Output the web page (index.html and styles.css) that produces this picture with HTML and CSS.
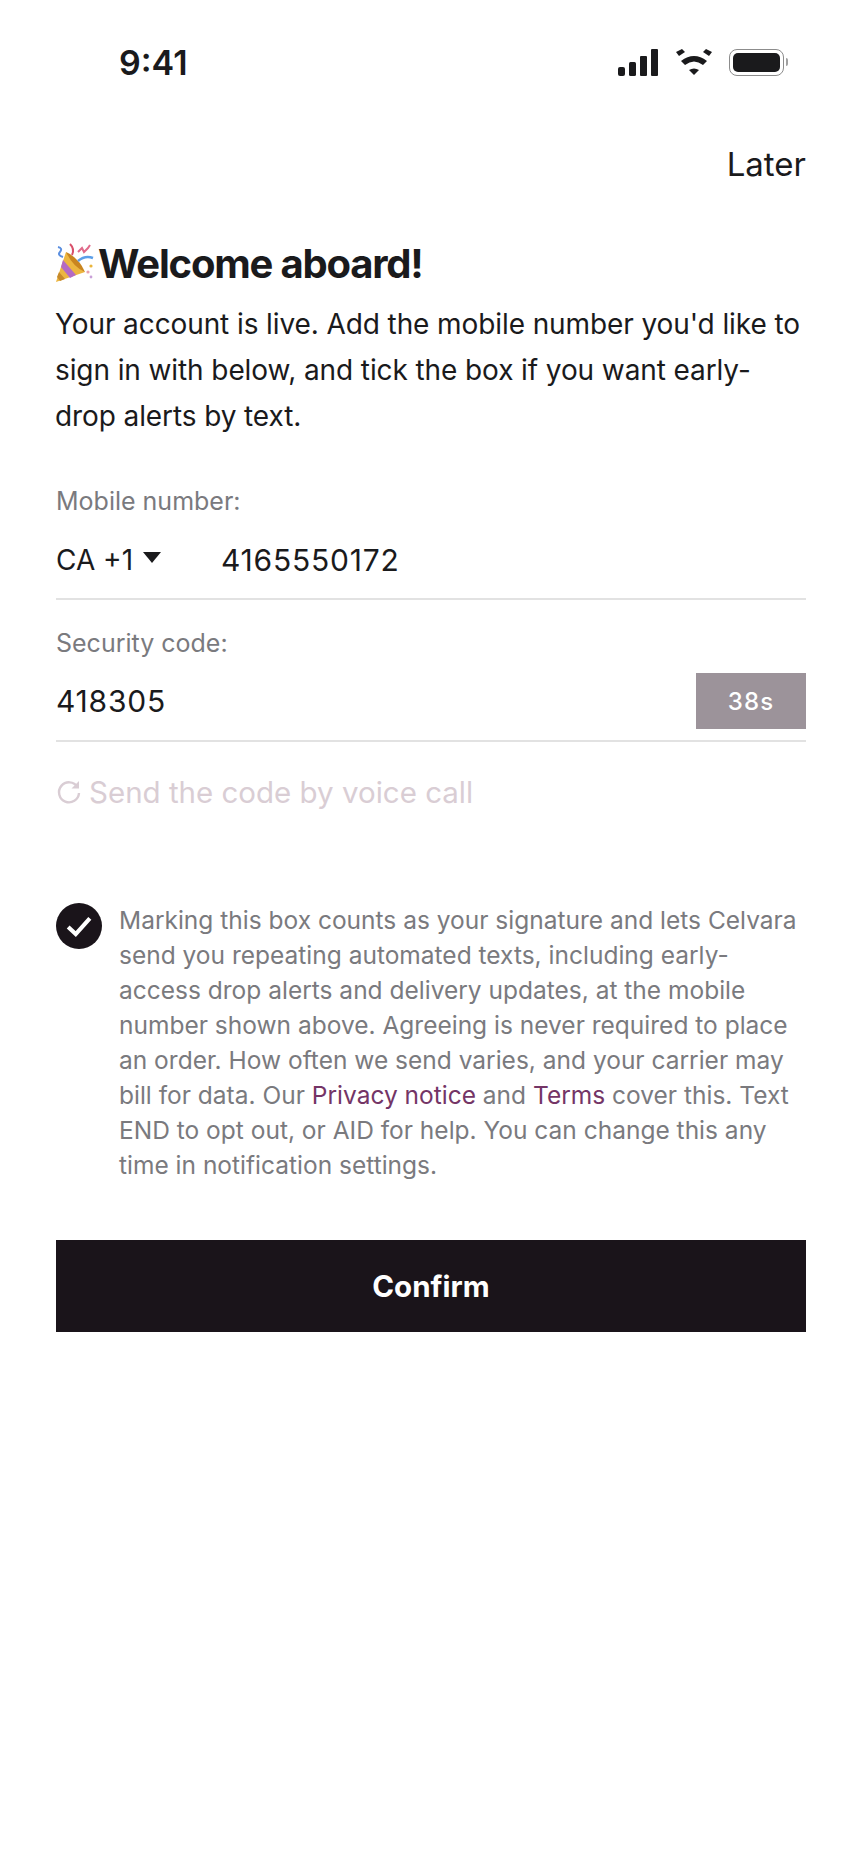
FILE: index.html
```html
<!DOCTYPE html>
<html lang="en">
  <head>
    <meta charset="UTF-8" />
    <meta name="viewport" content="width=device-width, initial-scale=1.0" />
    <title>Welcome aboard</title>
    <link rel="stylesheet" href="styles.css">
  </head>
  <body>
    <div class="status-bar">
      <span class="time">9:41</span>
      <div class="status-icons">
        <svg class="signal" width="40" height="27" viewBox="0 0 40 27">
          <rect x="0" y="18" width="7" height="9" rx="2" />
          <rect x="11" y="13" width="7" height="14" rx="1.5" />
          <rect x="22" y="7" width="7" height="20" rx="1" />
          <rect x="33" y="0" width="7" height="27" rx="1" />
        </svg>
        <svg class="wifi" width="36" height="27" viewBox="0 0 36 27">
          <path d="M0 3 L6 0 L9 3 L3 7 Z" />
          <path d="M36 3 L30 0 L27 3 L33 7 Z" />
          <path d="M5 12 Q18 2 31 12 L27 16 Q18 9 9 16 Z" />
          <path d="M13 21 Q18 18 23 21 L18 26 Z" />
        </svg>
        <div class="battery">
          <div class="battery-fill"></div>
        </div>
        <div class="battery-cap"></div>
      </div>
    </div>

    <div class="container">
      <div class="later-row">
        <a class="later">Later</a>
      </div>

      <div class="title-row">
        <svg class="party" width="40" height="40" viewBox="0 0 40 40">
          <path d="M11 9 L30 29 L1 39 Z" fill="#ecb640" />
          <path d="M8 17 L21 32 L15 35 L6 24 Z" fill="#b46ac4" />
          <path d="M4 29 L10 36 L5 38 L2 34 Z" fill="#c68a2a" />
          <path d="M11 9 Q24 15 30 29 Q18 24 11 9 Z" fill="#c9851f" />
          <path d="M17 12 Q20 6 15 1" fill="none" stroke="#d9506a" stroke-width="2" />
          <path d="M3 4 Q8 5 5 9 Q2 12 8 14" fill="none" stroke="#5b8fe0" stroke-width="2" />
          <path d="M23 18 Q30 12 38 15" fill="none" stroke="#5b9fe8" stroke-width="2.5" />
          <path d="M23 9 L27 5 L29 9 L33 5 L35 2" fill="none" stroke="#e06a8a" stroke-width="2" />
          <circle cx="36" cy="23" r="1.6" fill="#eab53c" />
          <circle cx="33" cy="29" r="1.6" fill="#e8a0b0" />
          <circle cx="36" cy="34" r="1.4" fill="#c9a0d8" />
        </svg>
        <h1>Welcome aboard!</h1>
      </div>
      <p class="intro">Your account is live. Add the mobile number you'd like to sign in with below, and tick the box if you want early-drop alerts by text.</p>

      <div class="field field-mobile">
        <label>Mobile number:</label>
        <div class="field-row">
          <span class="country">CA +1<span class="caret"></span></span>
          <span class="value">4165550172</span>
        </div>
      </div>

      <div class="field field-code">
        <label>Security code:</label>
        <div class="field-row">
          <span class="value">418305</span>
          <span class="timer">38s</span>
        </div>
      </div>

      <div class="voice">
        <svg width="26" height="26" viewBox="0 0 26 26">
          <path d="M21.5 8 A10 10 0 1 0 23 14" fill="none" stroke="#d9cdd4" stroke-width="2.4" />
          <path d="M23 2 V9.5 H15.5 Z" fill="#d9cdd4" />
        </svg>
        <span>Send the code by voice call</span>
      </div>

      <div class="consent">
        <span class="check">
          <svg width="26" height="26" viewBox="0 0 24 24">
            <path d="M2 13 L9 19.5 L22 5" fill="none" stroke="#fff" stroke-width="3.8" />
          </svg>
        </span>
        <p>Marking this box counts as your signature and lets Celvara send you repeating automated texts, including early-access drop alerts and delivery updates, at the mobile number shown above. Agreeing is never required to place an order. How often we send varies, and your carrier may bill for data. Our <a>Privacy notice</a> and <a>Terms</a> cover this. Text END to opt out, or AID for help. You can change this any time in notification settings.</p>
      </div>

      <button class="confirm">Confirm</button>
    </div>
  </body>
</html>
```

FILE: styles.css
```css
* {
  padding: 0;
  margin: 0;
  box-sizing: border-box;
}

body {
  width: 860px;
  min-height: 1864px;
  background-color: #fff;
  color: #1a1a1c;
  font-family: Inter, "Liberation Sans", sans-serif;
}

.status-bar {
  display: flex;
  justify-content: space-between;
  align-items: center;
  height: 124px;
  padding: 0 72px 0 119px;
}

.time {
  font-size: 34px;
  font-weight: 600;
}

.status-icons {
  display: flex;
  align-items: center;
  fill: #1a1a1c;
}

.signal {
  margin-right: 18px;
}

.wifi {
  margin-right: 17px;
}

.battery {
  width: 55px;
  height: 27px;
  padding: 3px;
  border: 1px solid #8c8c8c;
  border-radius: 8px;
}

.battery-fill {
  height: 100%;
  border-radius: 5px;
  background-color: #1a1a1c;
}

.battery-cap {
  width: 2px;
  height: 8px;
  margin-left: 2px;
  border-radius: 0 2px 2px 0;
  background-color: #a0a0a0;
}

.container {
  padding: 0 54px 0 56px;
}

.later-row {
  display: flex;
  justify-content: flex-end;
  height: 114px;
  padding-top: 20px;
}

.later {
  font-size: 33px;
  line-height: 40px;
}

.title-row {
  display: flex;
  align-items: center;
  gap: 3px;
  height: 50px;
}

.party {
  margin-left: -1px;
}

h1 {
  font-size: 40px;
  font-weight: 700;
  letter-spacing: -1.2px;
}

.intro {
  margin-top: 13px;
  margin-left: -1px;
  font-size: 28px;
  line-height: 46px;
  letter-spacing: -0.1px;
}

.field label {
  display: block;
  font-size: 25px;
  line-height: 32px;
  color: #7a7a7e;
}

.field-mobile {
  margin-top: 46px;
}

.field-code {
  margin-top: 27px;
}

.field-row {
  display: flex;
  align-items: center;
  border-bottom: 2px solid #e2e2e2;
}

.field-mobile .field-row {
  height: 83px;
  padding-top: 4px;
}

.field-code .field-row {
  height: 83px;
  padding-top: 3px;
  justify-content: space-between;
}

.country {
  display: flex;
  align-items: center;
  width: 165px;
  font-size: 28px;
}

.caret {
  width: 0;
  height: 0;
  margin-left: 10px;
  margin-bottom: 4px;
  border-left: 9px solid transparent;
  border-right: 9px solid transparent;
  border-top: 11px solid #1a1a1c;
}

.value {
  font-size: 30px;
  letter-spacing: 0.8px;
}

.timer {
  display: flex;
  justify-content: center;
  align-items: center;
  width: 110px;
  height: 56px;
  background-color: #9c939a;
  color: #fff;
  font-size: 24px;
  font-weight: 500;
  letter-spacing: 1.2px;
}

.voice {
  display: flex;
  align-items: center;
  gap: 7px;
  margin-top: 32px;
  color: #d9cdd4;
  font-size: 29.5px;
}

.consent {
  display: flex;
  gap: 17px;
  margin-top: 93px;
}

.check {
  display: flex;
  flex-shrink: 0;
  justify-content: center;
  align-items: center;
  width: 46px;
  height: 46px;
  border-radius: 50%;
  background-color: #1a141a;
}

.consent p {
  font-size: 24.5px;
  line-height: 35px;
  color: #7a7a7e;
}

.consent a {
  color: #743566;
}

.confirm {
  display: block;
  width: 100%;
  height: 92px;
  margin-top: 57px;
  border: none;
  background-color: #1a141a;
  color: #fff;
  font-family: inherit;
  font-size: 29.5px;
  font-weight: 700;
}
```
